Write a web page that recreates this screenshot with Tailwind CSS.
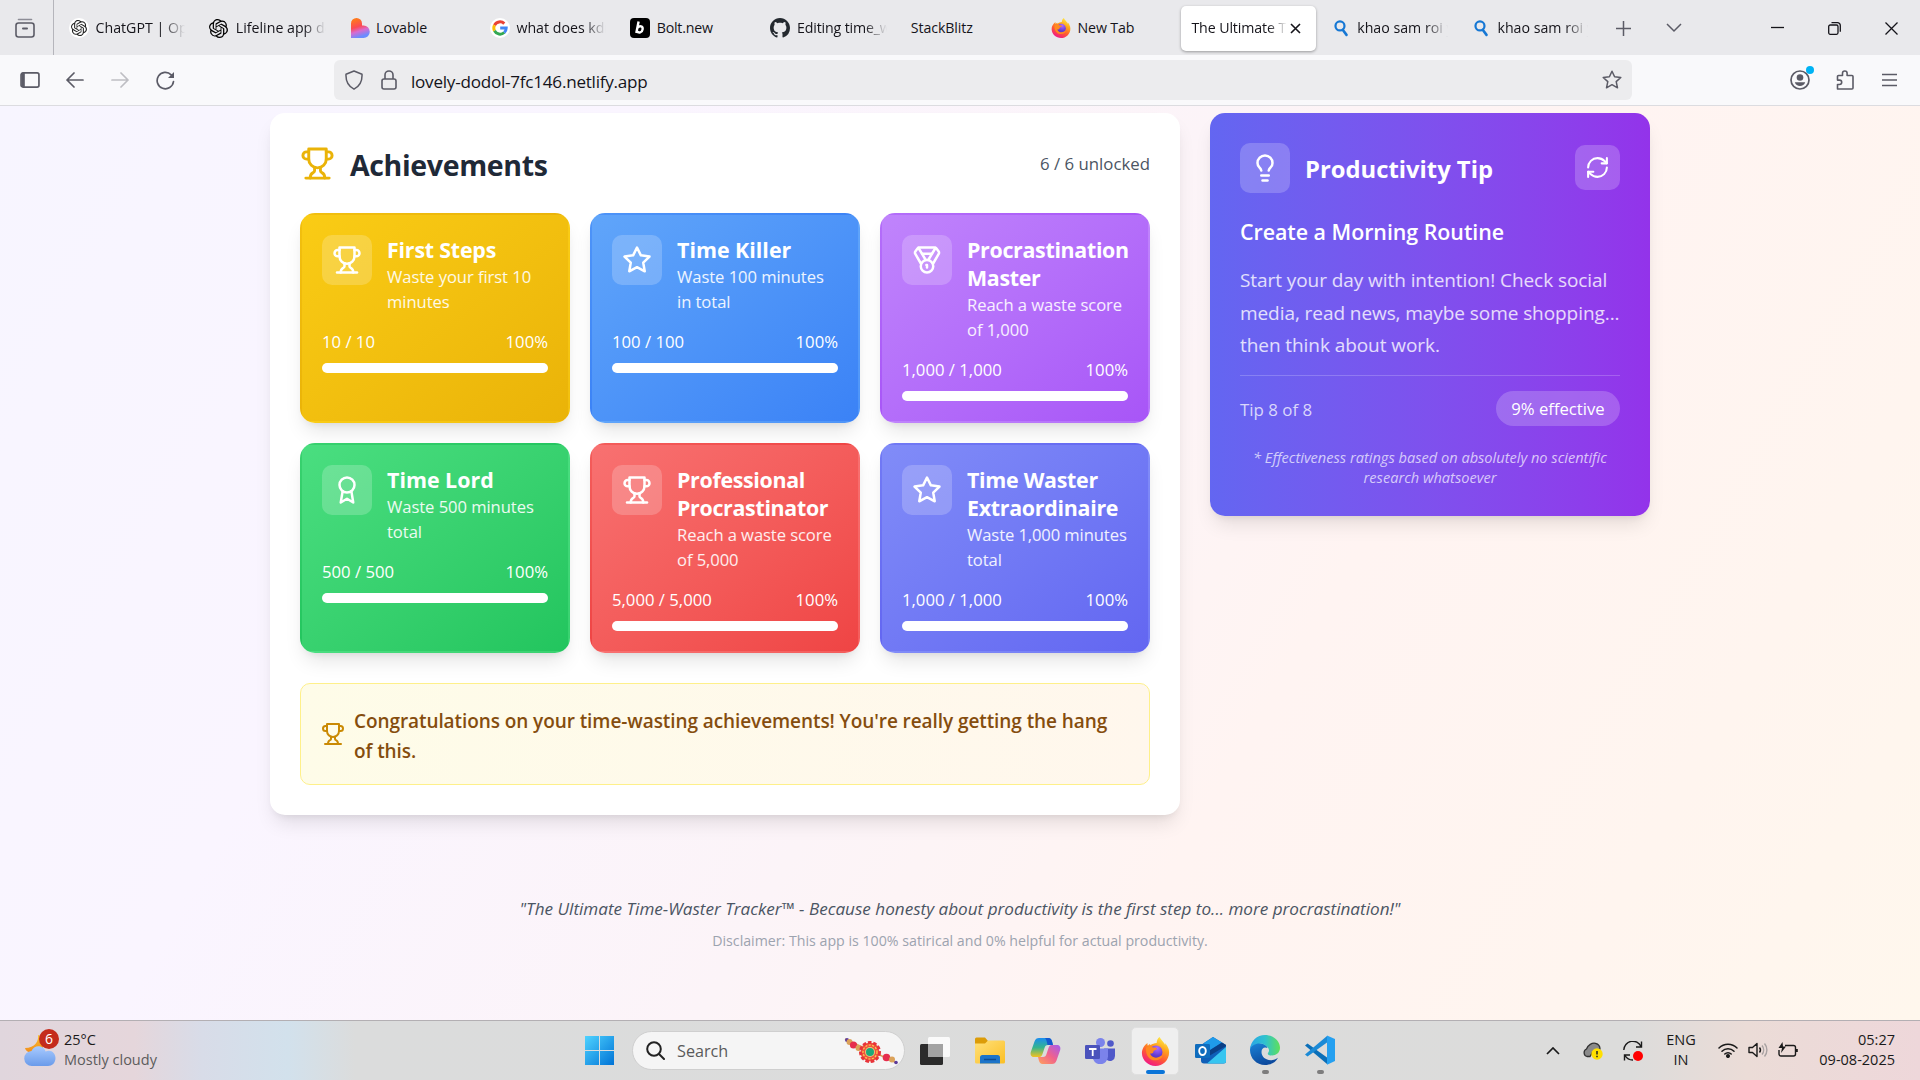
<!DOCTYPE html>
<html lang="en">
<head>
<meta charset="utf-8">
<title>The Ultimate Time-Waster Tracker</title>
<script src="https://cdn.jsdelivr.net/npm/@tailwindcss/browser@4"></script>
</head>
<body class="w-[1920px] h-[1080px] overflow-hidden flex flex-col font-['Open_Sans','Noto_Sans',sans-serif] text-[#15141a]">

<svg class="absolute size-0">
  <defs>
    <linearGradient id="gLove" x1="0" y1="0" x2="0.3" y2="1"><stop offset="0.1" stop-color="#ff7a1a"/><stop offset="0.5" stop-color="#fb4a55"/><stop offset="0.72" stop-color="#d86bd0"/><stop offset="1" stop-color="#6b8cff"/></linearGradient>
    <linearGradient id="gFox" x1="0.8" y1="0" x2="0.3" y2="1"><stop offset="0" stop-color="#fff44f"/><stop offset="0.35" stop-color="#ffa41c"/><stop offset="0.65" stop-color="#ff5a33"/><stop offset="1" stop-color="#f0148c"/></linearGradient>
    <radialGradient id="gOrb" cx="0.6" cy="0.2" r="0.9"><stop offset="0" stop-color="#b06bff"/><stop offset="0.6" stop-color="#6a3fd8"/><stop offset="1" stop-color="#4a2fb5"/></radialGradient>
    <linearGradient id="gWin" gradientUnits="userSpaceOnUse" x1="0" y1="0" x2="29" y2="29"><stop offset="0" stop-color="#4fd3ff"/><stop offset="1" stop-color="#0073d6"/></linearGradient>
    <linearGradient id="gCloud" x1="0" y1="0" x2="0" y2="1"><stop offset="0" stop-color="#a9cbff"/><stop offset="1" stop-color="#6a9bea"/></linearGradient>
    <linearGradient id="gMoon" x1="0" y1="0" x2="0" y2="1"><stop offset="0" stop-color="#fbc02d"/><stop offset="1" stop-color="#f08a1c"/></linearGradient>
    <linearGradient id="gFold" x1="0" y1="0" x2="1" y2="1"><stop offset="0" stop-color="#ffe07a"/><stop offset="1" stop-color="#fbbf24"/></linearGradient>
    <linearGradient id="gEdgeA" x1="0" y1="0.3" x2="1" y2="0.3"><stop offset="0" stop-color="#2aa5e6"/><stop offset="0.5" stop-color="#2fc2cf"/><stop offset="1" stop-color="#5fe05a"/></linearGradient>
    <linearGradient id="gEdgeB" x1="0" y1="0" x2="0.4" y2="1"><stop offset="0" stop-color="#1b84d8"/><stop offset="1" stop-color="#0c4a9e"/></linearGradient>
    <linearGradient id="gCopA" x1="0" y1="0" x2="0" y2="1"><stop offset="0" stop-color="#1b8df0"/><stop offset="0.5" stop-color="#35b58e"/><stop offset="1" stop-color="#f4c21f"/></linearGradient>
    <linearGradient id="gCopB" x1="1" y1="0" x2="0" y2="1"><stop offset="0" stop-color="#a45cf0"/><stop offset="0.5" stop-color="#f0628c"/><stop offset="1" stop-color="#ffa35c"/></linearGradient>
    <symbol id="trophy" viewBox="0 0 24 24"><path d="M6 9H4.500a2.500 2.500 0 0 1 0-5H6"/><path d="M18 9h1.500a2.500 2.500 0 0 0 0-5H18"/><path d="M4 22h16"/><path d="M10 14.660V17c0 .55-.47.98-.97 1.210C7.850 18.750 7 20.240 7 22"/><path d="M14 14.660V17c0 .55.47.98.97 1.210C16.150 18.750 17 20.240 17 22"/><path d="M18 2H6v7a6 6 0 0 0 12 0V2Z"/></symbol>
    <symbol id="star" viewBox="0 0 24 24"><polygon points="12 2 15.09 8.26 22 9.27 17 14.14 18.18 21.02 12 17.77 5.82 21.02 7 14.14 2 9.27 8.91 8.26 12 2"/></symbol>
    <symbol id="medal" viewBox="0 0 24 24"><path d="M7.210 15 2.660 7.140a2 2 0 0 1 .13-2.200L4.400 2.800A2 2 0 0 1 6 2h12a2 2 0 0 1 1.600.8l1.600 2.140a2 2 0 0 1 .14 2.200L16.790 15"/><path d="M11 12 5.120 2.200"/><path d="m13 12 5.880-9.800"/><path d="M8 7h8"/><circle cx="12" cy="17" r="5"/><path d="M12 18v-2h-.5"/></symbol>
    <symbol id="award" viewBox="0 0 24 24"><circle cx="12" cy="8" r="6"/><path d="M15.477 12.890 17 22l-5-3-5 3 1.523-9.110"/></symbol>
    <symbol id="bulb" viewBox="0 0 24 24"><path d="M15 14c.2-1 .7-1.700 1.500-2.500 1-.9 1.500-2.200 1.500-3.500A6 6 0 0 0 6 8c0 1 .2 2.200 1.500 3.500.7.7 1.300 1.500 1.500 2.500"/><path d="M9 18h6"/><path d="M10 22h4"/></symbol>
    <symbol id="refresh" viewBox="0 0 24 24"><path d="M3 12a9 9 0 0 1 9-9 9.750 9.750 0 0 1 6.740 2.740L21 8"/><path d="M21 3v5h-5"/><path d="M21 12a9 9 0 0 1-9 9 9.750 9.750 0 0 1-6.740-2.740L3 16"/><path d="M8 16H3v5"/></symbol>
    <symbol id="gpt" viewBox="0 0 24 24"><path fill="currentColor" d="M22.282 9.821a5.985 5.985 0 0 0-.516-4.911 6.046 6.046 0 0 0-6.510-2.900A6.065 6.065 0 0 0 4.981 4.182a5.985 5.985 0 0 0-3.998 2.900 6.046 6.046 0 0 0 .743 7.097 5.980 5.980 0 0 0 .511 4.911 6.051 6.051 0 0 0 6.515 2.900A5.985 5.985 0 0 0 13.260 24a6.056 6.056 0 0 0 5.772-4.206 5.990 5.990 0 0 0 3.998-2.900 6.056 6.056 0 0 0-.748-7.073zM13.260 22.430a4.476 4.476 0 0 1-2.876-1.041l.141-.081 4.779-2.758a.795.795 0 0 0 .393-.681v-6.737l2.020 1.169a.071.071 0 0 1 .038.052v5.583a4.504 4.504 0 0 1-4.495 4.494zM3.600 18.304a4.471 4.471 0 0 1-.535-3.014l.142.085 4.783 2.759a.771.771 0 0 0 .781 0l5.843-3.369v2.332a.080.080 0 0 1-.033.062L9.740 19.950a4.499 4.499 0 0 1-6.140-1.646zM2.341 7.896a4.485 4.485 0 0 1 2.366-1.973V11.600a.766.766 0 0 0 .388.677l5.815 3.354-2.020 1.169a.076.076 0 0 1-.071 0l-4.830-2.787A4.504 4.504 0 0 1 2.341 7.872zm16.596 3.856-5.833-3.387L15.119 7.200a.076.076 0 0 1 .071 0l4.830 2.791a4.494 4.494 0 0 1-.676 8.105v-5.678a.790.790 0 0 0-.407-.667zm2.010-3.023-.141-.085-4.774-2.782a.776.776 0 0 0-.785 0L9.409 9.230V6.897a.066.066 0 0 1 .028-.061l4.830-2.787a4.499 4.499 0 0 1 6.680 4.660zM8.307 12.863l-2.020-1.164a.080.080 0 0 1-.038-.057V6.074a4.499 4.499 0 0 1 7.376-3.454l-.142.081L8.704 5.460a.795.795 0 0 0-.393.681zm1.097-2.365 2.602-1.500 2.607 1.500v2.999l-2.597 1.500-2.607-1.500z"/></symbol>
    <symbol id="fox" viewBox="0 0 32 32"><path fill="url(#gFox)" d="M29.500 11c-.7-1.700-2.100-3.500-3.200-4.100.3.800.6 1.700.7 2.600C25.200 5 22 3.500 20.500 0c-2 1.300-3.200 4-3.200 6.500-2.700.1-5 1-6.800 2.500-.3-.4-.5-.9-.6-1.300-.9.500-1.700 1.200-2.300 2-.5-.8-.6-2-.5-3.200C3.500 9 .8 13.500 1 18c.3 8 7 14 15 14s15-6.500 15-15c0-2.200-.5-4.300-1.500-6z"/><circle cx="16.500" cy="16.500" r="7.200" fill="url(#gOrb)"/><path fill="#ff8a1f" d="M5.500 12c2.500-2.500 5.500-2 7.500-.5 2.500 0 4.500.6 4.800 1.300-.3 1.600-3 1.700-4 2.700.3 2.300-1.800 3-3.800 2.800 1 3 3.500 4.500 6.500 4.500 3.600 0 5.500-2.300 7.500-2.300-1.500 4-5 5.500-8.500 5.200C9 25.500 5 20 5.500 12z"/></symbol>
    <symbol id="mag" viewBox="0 0 16 20"><circle cx="6.800" cy="7" r="5.300" fill="none" stroke="currentColor" stroke-width="2.600"/><path d="m10 11.500 4.500 6" fill="none" stroke="currentColor" stroke-width="3" stroke-linecap="round"/></symbol>
  </defs>
</svg>

<!-- Tab strip -->
<header class="h-[55px] shrink-0 bg-[#e9e9ec] flex items-center text-[14.2px]">
  <div class="w-[54px] h-full border-r border-[#b5b5bb] flex items-center pl-[15px] pt-[1px]">
    <svg class="w-[20px] h-[20px]" viewBox="0 0 20 20" fill="none" stroke="#5b5b66" stroke-width="1.600" stroke-linecap="round"><rect x="1" y="5" width="18" height="14" rx="2.500"/><path d="M3.500 1.500h13" stroke="#8d8d96"/><path d="M8 10.500h4" stroke-width="2"/></svg>
  </div>
  <div class="flex items-center h-full pl-[5px] pt-[1px]">
    <div class="w-[140.3px] h-[45px] pl-[10px] pr-[14px] flex items-center gap-[6.500px]"><span class="size-[20px] shrink-0 rounded-full bg-white flex items-center justify-center"><svg class="size-[16px] text-[#222]"><use href="#gpt"/></svg></span><span class="whitespace-nowrap overflow-hidden mask-r-from-75%">ChatGPT | OpenAI</span></div>
    <div class="w-[140.3px] h-[45px] pl-[10px] pr-[14px] flex items-center gap-[6.500px]"><svg class="size-[19px] shrink-0 text-black"><use href="#gpt"/></svg><span class="whitespace-nowrap overflow-hidden mask-r-from-75% ml-px">Lifeline app design</span></div>
    <div class="w-[140.3px] h-[45px] pl-[10px] pr-[14px] flex items-center gap-[6.500px]"><svg class="size-[20px] shrink-0" viewBox="0 0 20 20"><path fill="url(#gLove)" d="M1 20V5.500a5.500 5.500 0 0 1 11 0V7.500h1.500a6.250 6.250 0 0 1 0 12.500z"/></svg><span class="whitespace-nowrap">Lovable</span></div>
    <div class="w-[140.3px] h-[45px] pl-[10px] pr-[14px] flex items-center gap-[6.500px]"><span class="size-[20px] shrink-0 rounded-full bg-white flex items-center justify-center"><svg class="size-[16px]" viewBox="0 0 16 16" fill="none" stroke-width="3"><path stroke="#ea4335" d="M12.300 3.600A6.200 6.200 0 0 0 2.500 5.200"/><path stroke="#fbbc05" d="M2.500 5.200a6.200 6.200 0 0 0 0 5.600"/><path stroke="#34a853" d="M2.500 10.800a6.200 6.200 0 0 0 9.700 1.700"/><path stroke="#4285f4" d="M12.200 12.500C13.500 11.400 14.200 9.800 14.200 8H8.200"/></svg></span><span class="whitespace-nowrap overflow-hidden mask-r-from-75%">what does kdrama</span></div>
    <div class="w-[140.3px] h-[45px] pl-[10px] pr-[14px] flex items-center gap-[6.500px]"><svg class="size-[20px] shrink-0" viewBox="0 0 20 20"><rect width="20" height="20" rx="4" fill="#000"/><path fill="none" stroke="#fff" stroke-width="2.400" d="M8.600 3.500 6.300 15M7.600 9.600c2-2.200 5.600-1.600 5 1.700-.5 3.500-4 4.200-5.600 2"/></svg><span class="whitespace-nowrap tracking-[-0.2px]">Bolt.new</span></div>
    <div class="w-[140.3px] h-[45px] pl-[10px] pr-[14px] flex items-center gap-[6.500px]"><svg class="size-[20px] shrink-0" viewBox="0 0 16 16" fill="#24292f"><path d="M8 0C3.580 0 0 3.580 0 8c0 3.540 2.290 6.530 5.470 7.590.4.070.55-.17.55-.38 0-.19-.01-.82-.01-1.490-2.010.37-2.530-.49-2.690-.94-.09-.23-.48-.94-.82-1.130-.28-.15-.68-.52-.01-.53.63-.01 1.080.58 1.230.82.72 1.210 1.870.87 2.330.66.07-.52.28-.87.51-1.070-1.780-.2-3.640-.89-3.640-3.950 0-.87.31-1.590.82-2.150-.08-.2-.36-1.020.08-2.120 0 0 .67-.21 2.200.82.64-.18 1.320-.27 2-.27s1.360.09 2 .27c1.530-1.040 2.200-.82 2.200-.82.44 1.100.16 1.920.08 2.120.51.56.82 1.270.82 2.150 0 3.070-1.870 3.750-3.650 3.950.29.25.54.73.54 1.480 0 1.070-.01 1.930-.01 2.200 0 .21.15.46.55.38A8.010 8.010 0 0 0 16 8c0-4.420-3.580-8-8-8z"/></svg><span class="whitespace-nowrap overflow-hidden mask-r-from-75% tracking-[-0.15px]">Editing time_waster</span></div>
    <div class="w-[140.3px] h-[45px] pl-[10px] pr-[14px] flex items-center"><span class="whitespace-nowrap tracking-[-0.1px]">StackBlitz</span></div>
    <div class="w-[140.3px] h-[45px] pl-[10px] pr-[14px] flex items-center gap-[6.500px]"><svg class="size-[20px] shrink-0"><use href="#fox"/></svg><span class="whitespace-nowrap tracking-[-0.15px]">New Tab</span></div>
    <div class="w-[135px] mr-[5.300px] h-[45px] pl-[10px] pr-[14px] flex items-center gap-[3px] rounded-[5px] bg-white shadow-[0_1px_3px_rgba(0,0,0,0.35)]"><span class="w-[96px] whitespace-nowrap overflow-hidden mask-r-from-80% tracking-[-0.1px]">The Ultimate Time</span><svg class="size-[11px] shrink-0" viewBox="0 0 11 11" stroke="#15141a" stroke-width="1.600"><path d="m1 1 9 9M10 1l-9 9"/></svg></div>
    <div class="w-[140.3px] h-[45px] pl-[10px] pr-[14px] flex items-center gap-[6.500px]"><svg class="w-[18px] h-[17px] shrink-0 text-[#1577d4]"><use href="#mag"/></svg><span class="whitespace-nowrap overflow-hidden mask-r-from-75% ml-[1px]">khao sam roi yot</span></div>
    <div class="w-[140.3px] h-[45px] pl-[10px] pr-[14px] flex items-center gap-[6.500px]"><svg class="w-[18px] h-[17px] shrink-0 text-[#1577d4]"><use href="#mag"/></svg><span class="whitespace-nowrap overflow-hidden mask-r-from-75% ml-[1px]">khao sam roi yot</span></div>
  </div>
  <svg class="size-[15px] ml-[14px] mt-[2px]" viewBox="0 0 15 15" stroke="#5b5b66" stroke-width="1.500"><path d="M7.500 0v15M0 7.500h15"/></svg>
  <svg class="w-[16px] h-[10px] ml-[35px]" viewBox="0 0 16 10" fill="none" stroke="#5b5b66" stroke-width="1.500"><path d="m1 1 7 7 7-7"/></svg>
  <svg class="w-[13px] h-[13px] ml-[89px]" viewBox="0 0 13 13" stroke="#15141a" stroke-width="1.300"><path d="M0 6.500h13"/></svg>
  <svg class="size-[13px] ml-[44px] mt-px" viewBox="0 0 13 13" fill="none" stroke="#15141a" stroke-width="1.300"><rect x=".7" y="3" width="9.300" height="9.300" rx="1.500"/><path d="M3.500.7h6a2.800 2.800 0 0 1 2.800 2.800v6.200"/></svg>
  <svg class="size-[13px] ml-[44px] mt-px" viewBox="0 0 13 13" stroke="#15141a" stroke-width="1.300"><path d="m.5.5 12 12M12.500.5l-12 12"/></svg>
</header>

<!-- Navigation bar -->
<nav class="h-[51px] shrink-0 bg-[#f9f9fb] border-b border-[#dcdce0] flex items-center">
  <svg class="w-[20px] h-[16px] ml-[20px]" viewBox="0 0 21 17" fill="none" stroke="#5b5b66" stroke-width="1.800"><rect x="1" y="1" width="19" height="15" rx="2"/><path d="M2.500 1v15M4 1v15" stroke-width="2"/></svg>
  <svg class="w-[18px] h-[16px] ml-[26px]" viewBox="0 0 18 16" fill="none" stroke="#5b5b66" stroke-width="1.700" stroke-linecap="round" stroke-linejoin="round"><path d="M17 8H1M8 1 1 8l7 7"/></svg>
  <svg class="w-[18px] h-[16px] ml-[27px]" viewBox="0 0 18 16" fill="none" stroke="#bebec3" stroke-width="1.700" stroke-linecap="round" stroke-linejoin="round"><path d="M1 8h16M10 1l7 7-7 7"/></svg>
  <svg class="size-[19px] ml-[27px]" viewBox="0 0 19 19" fill="none" stroke="#5b5b66" stroke-width="1.700" stroke-linecap="round"><path d="M17.500 10.500A8.200 8.200 0 1 1 15.200 3.800"/><path d="M18 1v6h-6z" fill="#5b5b66" stroke="none"/></svg>
  <div class="w-[1298px] h-[40px] ml-[159px] rounded-[6px] bg-[#ececee] flex items-center pl-[10px] pr-[10px]">
    <svg class="size-[20px]" viewBox="0 0 20 20" fill="none" stroke="#5b5b66" stroke-width="1.500" stroke-linejoin="round"><path d="M10 1 18 4.200c.4 7-2.500 12.300-8 15C4.500 16.500 1.600 11.200 2 4.200z"/></svg>
    <svg class="w-[16px] h-[20px] ml-[17px]" viewBox="0 0 16 20" fill="none" stroke="#5b5b66" stroke-width="1.600"><rect x="1" y="9" width="14" height="10" rx="2"/><path d="M4 9V5a4 4 0 0 1 8 0v4"/></svg>
    <span class="ml-[14px] mt-[3px] text-[17.100px] tracking-[-0.24px]">lovely-dodol-7fc146.netlify.app</span>
    <svg class="size-[20px] ml-auto" viewBox="0 0 20 20" fill="none" stroke="#5b5b66" stroke-width="1.500" stroke-linejoin="round"><path d="m10 1.200 2.600 5.600 6.200.7-4.600 4.100 1.300 6.200L10 14.700l-5.500 3.100 1.300-6.200L1.200 7.500l6.200-.7z"/></svg>
  </div>
  <svg class="size-[26px] ml-[157px] -mt-[4px]" viewBox="0 0 26 26" fill="none"><circle cx="11" cy="15" r="9" stroke="#5b5b66" stroke-width="1.700"/><circle cx="11" cy="12.500" r="3.300" fill="#5b5b66"/><path d="M5.800 17.300h10.400c-.8 2.500-2.800 3.700-5.200 3.700s-4.400-1.200-5.200-3.700z" fill="#5b5b66"/><circle cx="21" cy="5" r="4" fill="#00b3f4"/></svg>
  <svg class="w-[18px] h-[20px] ml-[21px]" viewBox="0 0 18 20" fill="none" stroke="#5b5b66" stroke-width="1.600" stroke-linejoin="round"><path d="M1.500 19V14.500H3.500a2.200 2.200 0 0 0 0-4.400H1.500V6.500a1 1 0 0 1 1-1H6.500V3.300a2.300 2.300 0 0 1 4.600 0V5.500H16a1 1 0 0 1 1 1V18a1 1 0 0 1-1 1z"/></svg>
  <svg class="w-[15px] h-[14px] ml-[28px]" viewBox="0 0 15 14" stroke="#5b5b66" stroke-width="1.500"><path d="M0 1.500h15M0 7h15M0 12.500h15"/></svg>
</nav>

<!-- Page -->
<main class="flex-1 min-h-0 bg-[linear-gradient(120deg,#f7f5ff_0%,#faf5ff_26%,#fcf4f8_50%,#fff4f2_66%,#fff5ef_85%,#fff7ed_100%)] overflow-hidden">
  <div class="w-[1380px] mx-auto pt-[7px] flex items-start gap-[30px]">
    <section class="w-[910px] h-[702px] bg-white rounded-[15px] p-[30px] shadow-[0_12px_19px_-4px_rgba(0,0,0,0.1),0_5px_8px_-5px_rgba(0,0,0,0.1)]">
      <div class="flex items-center justify-between h-[40px] mb-[30px]">
        <div class="flex items-center gap-[15px]">
          <svg class="size-[35px] text-[#eab308] fill-none stroke-current stroke-2 [stroke-linecap:round] [stroke-linejoin:round]"><use href="#trophy"/></svg>
          <h2 class="text-[28.500px] leading-[40px] font-bold text-[#1f2937] pt-[3px] tracking-[-0.35px]">Achievements</h2>
        </div>
        <span class="text-[16.800px] leading-[25px] pt-px text-[#4b5563]">6 / 6 unlocked</span>
      </div>
      <div class="grid grid-cols-3 gap-[20px]">
        <article class="h-[210px] rounded-[15px] border-2 border-transparent bg-linear-to-br from-[#facc15] to-[#eab308] p-[20px] text-white shadow-[0_12px_19px_-4px_rgba(0,0,0,0.1),0_5px_8px_-5px_rgba(0,0,0,0.1)]">
          <div class="flex gap-[15px] mb-[15px]">
            <div class="size-[50px] shrink-0 rounded-[10px] bg-white/20 flex items-center justify-center"><svg class="size-[30px] fill-none stroke-current stroke-2 [stroke-linecap:round] [stroke-linejoin:round]"><use href="#trophy"/></svg></div>
            <div class="pt-px"><h3 class="text-[21.400px] leading-[28px] font-bold tracking-[-0.2px]">First Steps</h3><p class="text-[16.600px] leading-[25px] text-white/90 tracking-[-0.06px]">Waste your first 10<br>minutes</p></div>
          </div>
          <div class="flex justify-between text-[16.700px] leading-[25px] mb-[9px]"><span>10 / 10</span><span>100%</span></div>
          <div class="h-[10px] rounded-full bg-white"></div>
        </article>
        <article class="h-[210px] rounded-[15px] border-2 border-transparent bg-linear-to-br from-[#60a5fa] to-[#3b82f6] p-[20px] text-white shadow-[0_12px_19px_-4px_rgba(0,0,0,0.1),0_5px_8px_-5px_rgba(0,0,0,0.1)]">
          <div class="flex gap-[15px] mb-[15px]">
            <div class="size-[50px] shrink-0 rounded-[10px] bg-white/20 flex items-center justify-center"><svg class="size-[30px] fill-none stroke-current stroke-2 [stroke-linecap:round] [stroke-linejoin:round]"><use href="#star"/></svg></div>
            <div class="pt-px"><h3 class="text-[21.400px] leading-[28px] font-bold">Time Killer</h3><p class="text-[16.600px] leading-[25px] text-white/90 tracking-[-0.06px]">Waste 100 minutes<br>in total</p></div>
          </div>
          <div class="flex justify-between text-[16.700px] leading-[25px] mb-[9px]"><span>100 / 100</span><span>100%</span></div>
          <div class="h-[10px] rounded-full bg-white"></div>
        </article>
        <article class="h-[210px] rounded-[15px] border-2 border-transparent bg-linear-to-br from-[#c084fc] to-[#a855f7] p-[20px] text-white shadow-[0_12px_19px_-4px_rgba(0,0,0,0.1),0_5px_8px_-5px_rgba(0,0,0,0.1)]">
          <div class="flex gap-[15px] mb-[15px]">
            <div class="size-[50px] shrink-0 rounded-[10px] bg-white/20 flex items-center justify-center"><svg class="size-[30px] fill-none stroke-current stroke-2 [stroke-linecap:round] [stroke-linejoin:round]"><use href="#medal"/></svg></div>
            <div class="whitespace-nowrap pt-px"><h3 class="text-[21.400px] leading-[28px] font-bold tracking-[-0.32px]">Procrastination<br>Master</h3><p class="text-[16.600px] leading-[25px] text-white/90 tracking-[-0.06px]">Reach a waste score<br>of 1,000</p></div>
          </div>
          <div class="flex justify-between text-[16.700px] leading-[25px] mb-[9px]"><span>1,000 / 1,000</span><span>100%</span></div>
          <div class="h-[10px] rounded-full bg-white"></div>
        </article>
        <article class="h-[210px] rounded-[15px] border-2 border-transparent bg-linear-to-br from-[#4ade80] to-[#22c55e] p-[20px] text-white shadow-[0_12px_19px_-4px_rgba(0,0,0,0.1),0_5px_8px_-5px_rgba(0,0,0,0.1)]">
          <div class="flex gap-[15px] mb-[15px]">
            <div class="size-[50px] shrink-0 rounded-[10px] bg-white/20 flex items-center justify-center"><svg class="size-[30px] fill-none stroke-current stroke-2 [stroke-linecap:round] [stroke-linejoin:round]"><use href="#award"/></svg></div>
            <div class="pt-px"><h3 class="text-[21.400px] leading-[28px] font-bold">Time Lord</h3><p class="text-[16.600px] leading-[25px] text-white/90 tracking-[-0.06px]">Waste 500 minutes<br>total</p></div>
          </div>
          <div class="flex justify-between text-[16.700px] leading-[25px] mb-[9px]"><span>500 / 500</span><span>100%</span></div>
          <div class="h-[10px] rounded-full bg-white"></div>
        </article>
        <article class="h-[210px] rounded-[15px] border-2 border-transparent bg-linear-to-br from-[#f87171] to-[#ef4444] p-[20px] text-white shadow-[0_12px_19px_-4px_rgba(0,0,0,0.1),0_5px_8px_-5px_rgba(0,0,0,0.1)]">
          <div class="flex gap-[15px] mb-[15px]">
            <div class="size-[50px] shrink-0 rounded-[10px] bg-white/20 flex items-center justify-center"><svg class="size-[30px] fill-none stroke-current stroke-2 [stroke-linecap:round] [stroke-linejoin:round]"><use href="#trophy"/></svg></div>
            <div class="whitespace-nowrap pt-px"><h3 class="text-[21.400px] leading-[28px] font-bold tracking-[-0.32px]">Professional<br>Procrastinator</h3><p class="text-[16.600px] leading-[25px] text-white/90 tracking-[-0.08px]">Reach a waste score<br>of 5,000</p></div>
          </div>
          <div class="flex justify-between text-[16.700px] leading-[25px] mb-[9px]"><span>5,000 / 5,000</span><span>100%</span></div>
          <div class="h-[10px] rounded-full bg-white"></div>
        </article>
        <article class="h-[210px] rounded-[15px] border-2 border-transparent bg-linear-to-br from-[#818cf8] to-[#6366f1] p-[20px] text-white shadow-[0_12px_19px_-4px_rgba(0,0,0,0.1),0_5px_8px_-5px_rgba(0,0,0,0.1)]">
          <div class="flex gap-[15px] mb-[15px]">
            <div class="size-[50px] shrink-0 rounded-[10px] bg-white/20 flex items-center justify-center"><svg class="size-[30px] fill-none stroke-current stroke-2 [stroke-linecap:round] [stroke-linejoin:round]"><use href="#star"/></svg></div>
            <div class="whitespace-nowrap pt-px"><h3 class="text-[21.400px] leading-[28px] font-bold tracking-[-0.28px]">Time Waster<br>Extraordinaire</h3><p class="text-[16.600px] leading-[25px] text-white/90 tracking-[-0.1px]">Waste 1,000 minutes<br>total</p></div>
          </div>
          <div class="flex justify-between text-[16.700px] leading-[25px] mb-[9px]"><span>1,000 / 1,000</span><span>100%</span></div>
          <div class="h-[10px] rounded-full bg-white"></div>
        </article>
      </div>
      <div class="mt-[30px] h-[102px] rounded-[10px] border border-[#fef08a] bg-linear-to-r from-[#fefce8] to-[#fff7ed] px-[20px] flex items-center gap-[9px]">
        <svg class="size-[24px] shrink-0 text-[#ca8a04] fill-none stroke-current stroke-2 [stroke-linecap:round] [stroke-linejoin:round]"><use href="#trophy"/></svg>
        <p class="pt-[4px] text-[19px] leading-[30px] font-semibold text-[#854d0e] whitespace-nowrap tracking-[-0.08px]">Congratulations on your time-wasting achievements! You're really getting the hang<br>of this.</p>
      </div>
    </section>

    <aside class="w-[440px] h-[403px] rounded-[15px] bg-linear-to-r from-[#6366f1] to-[#9333ea] p-[30px] text-white shadow-[0_12px_19px_-4px_rgba(0,0,0,0.1),0_5px_8px_-5px_rgba(0,0,0,0.1)]">
      <div class="flex items-center mb-[21px]">
        <div class="size-[50px] rounded-[10px] bg-white/20 flex items-center justify-center"><svg class="size-[30px] fill-none stroke-current stroke-2 [stroke-linecap:round] [stroke-linejoin:round]"><use href="#bulb"/></svg></div>
        <h2 class="ml-[15px] pt-[2px] text-[23.800px] leading-[35px] font-bold">Productivity Tip</h2>
        <div class="ml-auto mb-px size-[45px] rounded-[10px] bg-white/20 flex items-center justify-center"><svg class="size-[25px] fill-none stroke-current stroke-2 [stroke-linecap:round] [stroke-linejoin:round]"><use href="#refresh"/></svg></div>
      </div>
      <h3 class="text-[21.400px] leading-[35px] font-semibold mb-[15px] tracking-[-0.04px]">Create a Morning Routine</h3>
      <p class="text-[19px] leading-[32.500px] text-white/80 whitespace-nowrap tracking-[-0.07px]">Start your day with intention! Check social<br>media, read news, maybe some shopping...<br>then think about work.</p>
      <div class="mt-[13px] border-t border-white/20 pt-[15px] flex items-center justify-between">
        <span class="text-[16.900px] leading-[25px] pt-[2px] text-white/75">Tip 8 of 8</span>
        <span class="h-[35px] w-[124px] rounded-full bg-white/20 flex items-center justify-center text-[16.700px] pt-[2px]">9% effective</span>
      </div>
      <p class="mt-[21px] text-center text-[14.600px] leading-[20px] italic text-white/70 whitespace-nowrap">* Effectiveness ratings based on absolutely no scientific<br>research whatsoever</p>
    </aside>
  </div>
  <footer class="mt-[79px] text-center">
    <p class="text-[17.120px] leading-[30px] italic text-[#4b5563]">"The Ultimate Time-Waster Tracker™ - Because honesty about productivity is the first step to... more procrastination!"</p>
    <p class="mt-[7px] text-[14.200px] leading-[20px] text-[#9ca3af]">Disclaimer: This app is 100% satirical and 0% helpful for actual productivity.</p>
  </footer>
</main>

<!-- Taskbar -->
<footer class="h-[60px] shrink-0 border-t border-[#b3afb3] bg-[linear-gradient(90deg,#e0d6dd_0%,#e5d6db_7%,#d8dce8_10.500%,#d2e1ec_15%,#dbdcdc_18.500%,#dcdcdb_85%,#ebdcd7_91%,#eed7da_100%)] flex items-center">
  <div class="w-[570px] flex items-center pl-[24px] gap-[4px]">
    <svg class="w-[36px] h-[40px] -mt-[6px]" viewBox="0 0 36 40"><path fill="url(#gMoon)" d="M14 7c1 6-3 13-13 13 1 4 6 6 10 5l8-4V9z"/><path fill="url(#gCloud)" d="M8 38a7.500 7.500 0 0 1-.5-15C9 19 13 17.500 16.500 18.500c2.500.7 4.500 2.500 5 5C27 21 31.500 25 31.500 30c0 5-3.500 8-7.500 8z"/><circle cx="25" cy="11" r="10" fill="#c42b1c"/><text x="25" y="16" text-anchor="middle" font-size="14" fill="#fff">6</text></svg>
    <div class="text-[14.500px] leading-[20px] -mt-[2px]"><div class="text-[#1a1a1a]">25°C</div><div class="text-[#5c5c5c]">Mostly cloudy</div></div>
  </div>
  <div class="flex items-center">
    <svg class="size-[29px] ml-[15px]" viewBox="0 0 29 29" fill="url(#gWin)"><path d="M0 0h14v14H0zM15 0h14v14H15zM0 15h14v14H0zM15 15h14v14H15z"/></svg>
    <div class="ml-[18px] w-[273px] h-[39px] rounded-full bg-[#f5f5f5] border border-[#cfcfcf] flex items-center pl-[13px]">
      <svg class="size-[19px]" viewBox="0 0 19 19" fill="none" stroke="#222" stroke-width="2" stroke-linecap="round"><circle cx="8" cy="8" r="6.800"/><path d="m13 13 5 5"/></svg>
      <span class="ml-[12px] mt-px text-[16.200px] text-[#5a5a5a]">Search</span>
      <svg class="w-[54px] h-[28px] ml-auto mr-[6px]" viewBox="0 0 54 28"><path d="M1 2 53 26" stroke="#d9a05c" stroke-width="1.500"/><circle cx="3" cy="3" r="2" fill="#5b3a9b"/><circle cx="5.500" cy="5" r="3" fill="#dba25a"/><circle cx="9.500" cy="8" r="3.600" fill="#e62e4d"/><circle cx="14.500" cy="11" r="3" fill="#dba25a"/><circle cx="42.500" cy="20.500" r="3.800" fill="#e62e4d"/><circle cx="48" cy="22.500" r="3" fill="#dba25a"/><circle cx="52" cy="25.500" r="1.800" fill="#5b3a9b"/><circle cx="26" cy="15" r="9.500" fill="#f0533e" stroke="#e8333a" stroke-width="3" stroke-dasharray="3.500 1.800"/><circle cx="26" cy="15" r="7" fill="none" stroke="#ffd24d" stroke-width="1.200" stroke-dasharray="2 1.500"/><circle cx="26" cy="15" r="5" fill="#f4c27a"/><circle cx="26" cy="15" r="4" fill="#1fa97a"/></svg>
    </div>
  </div>
  <div class="flex items-center ml-[2.500px] h-full">
    <div class="w-[55px] flex justify-center"><svg class="w-[30px] h-[28px]" viewBox="0 0 30 28"><rect x="0" y="7" width="23" height="21" rx="1.500" fill="#2b2b2b"/><rect x="8" y="0" width="22" height="20" rx="1.500" fill="#fafafa"/><rect x="8" y="7" width="15" height="13" fill="#a3a3a3"/></svg></div>
    <div class="w-[55px] flex justify-center"><svg class="w-[30px] h-[27px]" viewBox="0 0 30 27"><path d="M0 2a1.500 1.500 0 0 1 1.500-1.500H10L13 4v4H0z" fill="#dc9c08"/><path d="M0 6.500 10 6.500 13 3.500H28.500A1.500 1.500 0 0 1 30 5V25a1.500 1.500 0 0 1-1.500 1.500h-27A1.500 1.500 0 0 1 0 25z" fill="url(#gFold)"/><path d="M5 26.500V20.500a2.500 2.500 0 0 1 2.500-2.500h15a2.500 2.500 0 0 1 2.500 2.500v6z" fill="#1c74c9"/><path d="M9 22.500h12" stroke="#0c4c94" stroke-width="1.500"/></svg></div>
    <div class="w-[55px] flex justify-center"><svg class="w-[31px] h-[28px]" viewBox="0 0 31 28"><path fill="url(#gCopA)" d="M9 1h9.500c2 0 3 1.500 3.600 3.500L23 8h-5c-2 0-3 1-3.500 3l-2 6c-.8 2.500-2 3-4 3H4c-2.500 0-4-2-3.200-5L4.500 4.500C5.300 2 6.800 1 9 1z"/><path fill="url(#gCopB)" d="M22 27h-9.500c-2 0-3-1.500-3.600-3.500L8 20h5c2 0 3-1 3.500-3l2-6c.8-2.500 2-3 4-3H27c2.500 0 4 2 3.200 5l-3.700 10.500C25.700 26 24.200 27 22 27z"/><path fill="#1459cf" d="M15 1h3.500c2 0 3 1.500 3.600 3.500L23 8h-5.500c-.6-3-1-5.500-2.500-7z"/></svg></div>
    <div class="w-[55px] flex justify-center"><svg class="w-[30px] h-[26px]" viewBox="0 0 30 26"><circle cx="25.500" cy="5.500" r="3.300" fill="#5059c9"/><path d="M19 10.500h11V18a5 5 0 0 1-8 4z" fill="#5059c9"/><circle cx="15.500" cy="4.500" r="4.500" fill="#7b83eb"/><path d="M7.500 10.500H23V18.500a7.500 7.500 0 0 1-15.500 0z" fill="#7b83eb"/><rect x="0" y="7" width="15" height="14" rx="1.300" fill="#4b53bc"/><path d="M4 11h7.500M7.700 11v7" stroke="#fff" stroke-width="1.800"/></svg></div>
    <div class="w-[55px] h-full flex justify-center items-center"><div class="w-[48px] h-[48px] rounded-[5px] bg-[#efefef] border border-[#e0e0e0] flex flex-col items-center justify-between pt-[9px]"><svg class="size-[29px]"><use href="#fox"/></svg><span class="w-[19px] h-[4px] rounded-full bg-[#0a74d8]"></span></div></div>
    <div class="w-[55px] flex justify-center"><svg class="w-[31px] h-[27px]" viewBox="0 0 31 27"><path d="M6 8 18 0l13 8v16a2.500 2.500 0 0 1-2.500 2.500H9A3 3 0 0 1 6 23.500z" fill="#0f5fb8"/><path d="M9 6 18 0l9 5.500L12 15z" fill="#1f9bea"/><path d="M12 15 27 5.500l4 2.500v1L14 19z" fill="#0a3f86"/><path d="M31 10v14a2.500 2.500 0 0 1-2.500 2.500H12z" fill="#37c5f0"/><rect x="0" y="7" width="15" height="14" rx="1.300" fill="#0f6cbd"/><ellipse cx="7.500" cy="14" rx="3.300" ry="4" fill="none" stroke="#fff" stroke-width="1.900"/></svg></div>
    <div class="w-[55px] h-full pt-[14px] flex flex-col items-center gap-[5px]"><svg class="size-[30px] shrink-0" viewBox="0 0 30 30"><path fill="url(#gEdgeB)" d="M0 15C0 10 4 7.500 9 8c4 .3 8 2 8.500 5-3-1.500-6 0-6 4 0 5.500 5.500 9 11 8 2-.3 4-1.200 5.500-2.300C25.500 27.500 20.700 30 15 30 6.500 30 0 23.300 0 15z"/><path fill="url(#gEdgeA)" d="M0 14.500C.5 6 7 0 15 0c9 0 15 6.500 15 12.800 0 5-4 7.700-8 7.700-3.500 0-4.700-1.200-4-2.500 1.200-1.500 1.300-2.800.5-4.500C17 10.500 13.500 8.500 9.500 8.500 5 8.500 1 11 0 14.500z"/></svg><span class="w-[7px] h-[4px] rounded-full bg-[#7d7d7d]"></span></div>
    <div class="w-[55px] h-full pt-[14px] flex flex-col items-center gap-[5px]"><svg class="size-[30px] shrink-0" viewBox="0 0 30 30"><path fill="#0b6fb8" d="M0 10.500 2.500 8.500 22 22.500V29z"/><path fill="#1b8ad6" d="M0 19.500 2.500 21.500 22 7.500V1z"/><path fill="#25a0f0" d="M22 .5 30 4v22l-8 3.700z"/></svg><span class="w-[7px] h-[4px] rounded-full bg-[#7d7d7d]"></span></div>
  </div>
  <div class="flex-1 flex items-center justify-end pr-[25px] text-[14.500px] leading-[20px] text-[#1a1a1a]">
    <svg class="w-[14px] h-[8px]" viewBox="0 0 14 8" fill="none" stroke="#1a1a1a" stroke-width="1.700"><path d="m1 7 6-6 6 6"/></svg>
    <svg class="w-[20px] h-[18px] ml-[23px]" viewBox="0 0 20 18"><path d="M4 14.500A4 4 0 0 1 3.500 7C5 3 9 .5 12.500 1.300c3 .7 4.500 3 4.500 5.700l-7 2.500-3 5z" fill="#8a8a8a" stroke="#333" stroke-width="1.300"/><circle cx="14" cy="12" r="5.700" fill="#ffe000"/><path d="M14 9v3.500M14 13.800v1.400" stroke="#222" stroke-width="1.500"/></svg>
    <svg class="w-[20px] h-[20px] ml-[20px]" viewBox="0 0 20 20" fill="none" stroke="#1a1a1a" stroke-width="1.400"><path d="M.8 9A9 9 0 0 1 18 5.500M18.500.5V6H13M10 19A9 9 0 0 1 2 14.500M1.500 19.500V14H7"/><circle cx="15" cy="15" r="5" fill="red" stroke="none"/></svg>
    <div class="w-[40px] ml-[18px] -mt-px text-center">ENG<br>IN</div>
    <svg class="w-[20px] h-[16px] ml-[17px] -mt-[2px]" viewBox="0 0 20 16" fill="none" stroke="#1a1a1a" stroke-width="1.500" stroke-linecap="round"><path d="M1 6a12.500 12.500 0 0 1 18 0M4 9.200a8.300 8.300 0 0 1 12 0M6.800 12a4.500 4.500 0 0 1 6.400 0"/><circle cx="10" cy="14" r="1.300" fill="#1a1a1a"/></svg>
    <svg class="w-[20px] h-[16px] ml-[10px] -mt-[2px]" viewBox="0 0 20 16" fill="none" stroke="#1a1a1a" stroke-width="1.400" stroke-linejoin="round"><path d="M1 5.500h3.500L9 1.500v13L4.500 10.500H1z"/><path d="M11.500 5.500a4 4 0 0 1 0 5"/><path d="M14 3.500a7 7 0 0 1 0 9M16.500 1.500a10 10 0 0 1 0 13" stroke="#a8a2a2"/></svg>
    <svg class="w-[20px] h-[16px] ml-[10px] -mt-[2px]" viewBox="0 0 20 16" fill="none" stroke="#1a1a1a" stroke-width="1.400"><path d="M7 3.500h8.500a2 2 0 0 1 2 2v6.500a2 2 0 0 1-2 2H3a2 2 0 0 1-2-2V8"/><path d="M18 7h1.800v3H18z" fill="#1a1a1a" stroke="none"/><path d="M4.500 0 .5 6H4L3 11l5-6.500H5z" fill="#1a1a1a" stroke="none"/></svg>
    <div class="w-[97px] -mt-[2px] text-right whitespace-nowrap">05:27<br>09-08-2025</div>
  </div>
</footer>
</body>
</html>
